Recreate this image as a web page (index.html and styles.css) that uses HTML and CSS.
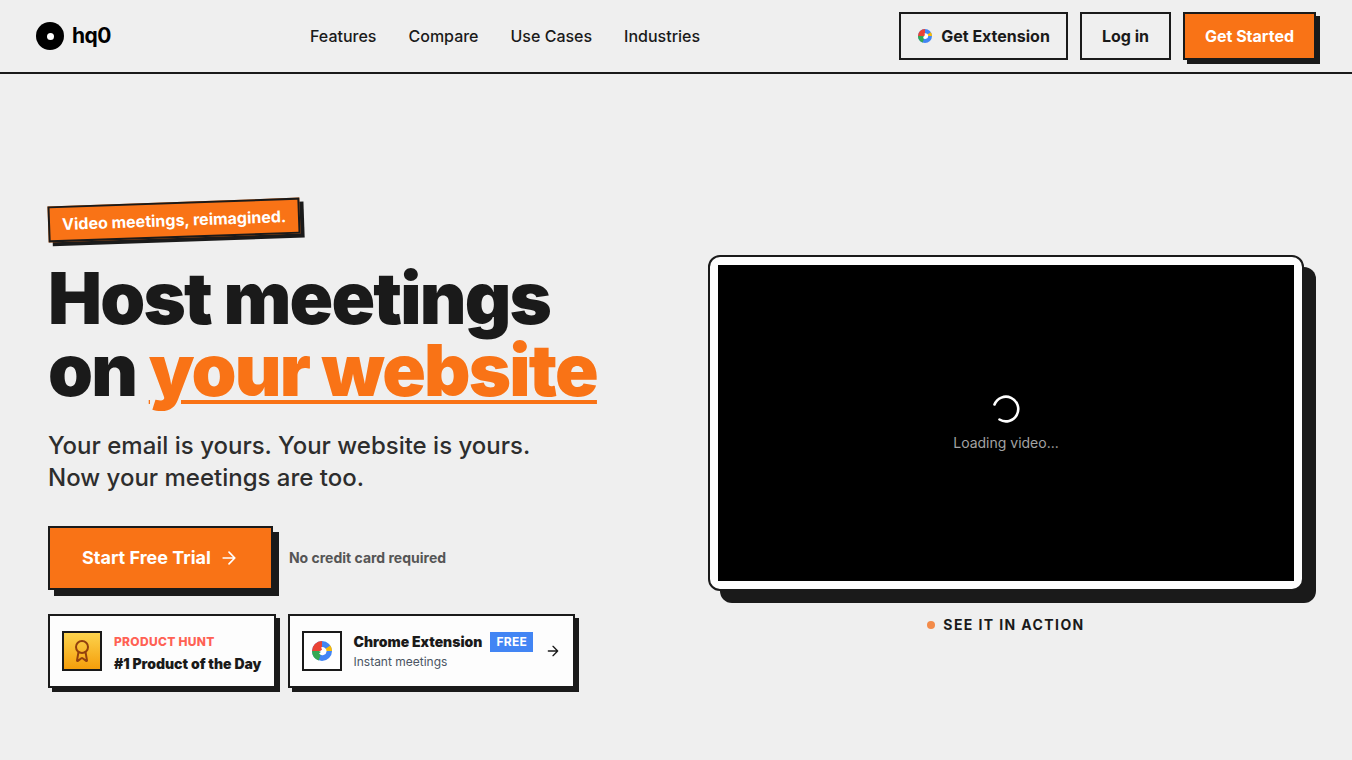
FILE: index.html
```html
<!DOCTYPE html>
<html lang="en">
<head>
    <meta charset="UTF-8">
    <meta name="viewport" content="width=device-width, initial-scale=1.0">
    <title>hq0 - Host meetings on your website</title>
    <link rel="stylesheet" href="styles.css">
</head>
<body>
    <svg class="sprite" aria-hidden="true">
        <symbol id="chrome" viewBox="0 0 24 24">
            <circle cx="12" cy="12" r="12" fill="#4285f4"/>
            <path d="M12 12V0A12 12 0 0 0 0 12z" fill="#ea4335"/>
            <path d="M12 12H0a12 12 0 0 0 8 11.300z" fill="#34a853"/>
            <path d="M12 12h12a12 12 0 0 0-2-6.600z" fill="#fbbc04"/>
            <path d="M11 7.500a5 5 0 0 1 6.500 5 5 5 0 0 1-9 2.500l2.500-2h-2.500l3.500-2.500z" fill="#fff"/>
        </symbol>
        <symbol id="arrow" viewBox="0 0 24 24">
            <path d="M5 12h14M12 5l7 7-7 7" fill="none" stroke="currentColor" stroke-width="2" stroke-linecap="round" stroke-linejoin="round"/>
        </symbol>
    </svg>

    <header class="navbar">
        <a class="logo" href="#">
            <svg class="logo-mark" viewBox="0 0 28 28" aria-hidden="true">
                <circle cx="14" cy="14" r="14" fill="#000"/>
                <circle cx="14.500" cy="14.500" r="3.500" fill="#fff"/>
            </svg>
            hq0
        </a>
        <nav class="nav-links">
            <a href="#">Features</a>
            <a href="#">Compare</a>
            <a href="#">Use Cases</a>
            <a href="#">Industries</a>
        </nav>
        <div class="nav-actions">
            <a class="btn btn-extension" href="#"><svg class="icon-sm" aria-hidden="true"><use href="#chrome"/></svg>Get Extension</a>
            <a class="btn" href="#">Log in</a>
            <a class="btn btn-primary" href="#">Get Started</a>
        </div>
    </header>

    <main class="hero">
        <section class="hero-text">
            <div class="tagline">Video meetings, reimagined.</div>
            <h1>Host meetings<br>on <span class="highlight">your website</span></h1>
            <p class="subtitle">Your email is yours. Your website is yours.<br>Now your meetings are too.</p>
            <div class="cta">
                <button class="btn-trial" type="button">Start Free Trial<svg class="icon-arrow" aria-hidden="true"><use href="#arrow"/></svg></button>
                <span class="cta-note">No credit card required</span>
            </div>
            <div class="cards">
                <a class="card" href="#">
                    <span class="card-icon card-icon-gold">
                        <svg class="icon-award" viewBox="0 0 24 24" fill="none" stroke="currentColor" stroke-width="2" stroke-linecap="round" stroke-linejoin="round" aria-hidden="true">
                            <circle cx="12" cy="8" r="6"/>
                            <path d="m15.477 12.890 1.515 8.526a.5.5 0 0 1-.81.47l-3.580-2.687a1 1 0 0 0-1.197 0l-3.586 2.686a.5.5 0 0 1-.81-.469l1.514-8.526"/>
                        </svg>
                    </span>
                    <span class="card-body card-body-spaced">
                        <span class="card-label">PRODUCT HUNT</span>
                        <span class="card-title">#1 Product of the Day</span>
                    </span>
                </a>
                <a class="card" href="#">
                    <span class="card-icon">
                        <svg class="icon-chrome" aria-hidden="true"><use href="#chrome"/></svg>
                    </span>
                    <span class="card-body">
                        <span class="card-row">
                            <span class="card-title">Chrome Extension</span>
                            <span class="free">FREE</span>
                        </span>
                        <span class="card-desc">Instant meetings</span>
                    </span>
                    <svg class="icon-next" aria-hidden="true"><use href="#arrow"/></svg>
                </a>
            </div>
        </section>

        <section class="hero-video">
            <div class="video-frame">
                <div class="video">
                    <svg class="spinner" viewBox="0 0 32 32" aria-hidden="true">
                        <path d="M4.500 11.500A12.300 12.300 0 1 1 9.500 26.500" fill="none" stroke="#fff" stroke-width="2.600" stroke-linecap="round"/>
                    </svg>
                    <span class="video-status">Loading video...</span>
                </div>
            </div>
            <div class="video-caption"><span class="dot"></span>SEE IT IN ACTION</div>
        </section>
    </main>
</body>
</html>
```

FILE: styles.css
```css
* {
    box-sizing: border-box;
}
body {
    margin: 0;
    font-family: Inter, "Liberation Sans", sans-serif;
    font-size: 16px;
    line-height: 24px;
    color: #1a1a1a;
    background-color: #efefef;
}
a {
    color: inherit;
    text-decoration: none;
}
svg {
    flex-shrink: 0;
}
.sprite {
    display: none;
}

/* header */
.navbar {
    display: flex;
    align-items: center;
    justify-content: space-between;
    padding: 12px 36px;
    border-bottom: 2px solid #1a1a1a;
}
.logo {
    display: flex;
    align-items: center;
    gap: 8px;
    font-size: 21px;
    font-weight: 700;
    letter-spacing: -0.025em;
    color: #000;
}
.logo-mark {
    width: 28px;
    height: 28px;
}
.nav-links {
    display: flex;
    gap: 32px;
    font-weight: 500;
}
.nav-actions {
    display: flex;
    gap: 12px;
}
.btn {
    display: flex;
    align-items: center;
    gap: 8px;
    padding: 10px 20px;
    border: 2px solid #1a1a1a;
    font-weight: 700;
}
.btn-extension {
    padding: 10px 16px;
}
.btn-primary {
    color: #fff;
    background-color: #f97316;
    box-shadow: 4px 4px 0 #1a1a1a;
}
.icon-sm {
    width: 16px;
    height: 16px;
    padding: 1px;
}

/* hero */
.hero {
    display: grid;
    grid-template-columns: 1fr 1fr;
    gap: 64px;
    align-items: center;
    padding: 128px 48px 72px;
}
.tagline {
    width: fit-content;
    padding: 4px 12px;
    border: 2px solid #1a1a1a;
    font-weight: 700;
    color: #fff;
    background-color: #f97316;
    box-shadow: 4px 4px 0 #1a1a1a;
    transform: rotate(-2deg);
}
h1 {
    margin: 24px 0;
    font-size: 72px;
    line-height: 72px;
    font-weight: 900;
    letter-spacing: -0.025em;
}
.highlight {
    color: #f97316;
    text-decoration: underline;
    text-decoration-thickness: 4px;
    text-underline-offset: 4px;
}
.subtitle {
    margin: 0 0 32px;
    font-size: 24px;
    line-height: 32px;
    font-weight: 500;
    color: #2d2d2d;
}
.cta {
    display: flex;
    align-items: center;
    gap: 16px;
    margin-bottom: 24px;
}
.btn-trial {
    display: flex;
    align-items: center;
    gap: 8px;
    padding: 16px 32px;
    border: 2px solid #1a1a1a;
    font: 700 18px/28px Inter, "Liberation Sans", sans-serif;
    color: #fff;
    background-color: #f97316;
    box-shadow: 6px 6px 0 #1a1a1a;
    cursor: pointer;
}
.icon-arrow {
    width: 20px;
    height: 20px;
}
.cta-note {
    font-size: 14px;
    font-weight: 700;
    color: #555;
}
.cards {
    display: flex;
    gap: 12px;
}
.card {
    display: flex;
    align-items: center;
    gap: 12px;
    padding: 12px;
    border: 2px solid #1a1a1a;
    background-color: #fdfdfd;
    box-shadow: 4px 4px 0 #1a1a1a;
}
.card-icon {
    display: flex;
    align-items: center;
    justify-content: center;
    width: 40px;
    height: 40px;
    border: 2px solid #1a1a1a;
    background-color: #fff;
}
.card-icon-gold {
    color: #92400e;
    background: linear-gradient(#fcd34d, #f59e0b);
}
.icon-award {
    width: 24px;
    height: 24px;
}
.icon-chrome {
    width: 20px;
    height: 20px;
}
.card-body {
    display: flex;
    flex-direction: column;
    align-self: stretch;
    padding-top: 4px;
    line-height: 20px;
}
.card-body-spaced {
    gap: 2px;
}
.card-row {
    display: flex;
    align-items: center;
    gap: 8px;
}
.card-label {
    font-size: 12px;
    font-weight: 800;
    letter-spacing: 0.025em;
    color: #ff6154;
}
.card-title {
    font-size: 14px;
    font-weight: 900;
}
.card-desc {
    font-size: 12px;
    color: #4b5563;
}
.free {
    padding: 0 6px;
    font-size: 12px;
    font-weight: 700;
    letter-spacing: 0.025em;
    color: #fff;
    background-color: #4285f4;
}
.icon-next {
    width: 16px;
    height: 16px;
}

/* video */
.video-frame {
    display: flex;
    aspect-ratio: 16 / 9;
    padding: 8px;
    border: 2px solid #1a1a1a;
    border-radius: 12px;
    background-color: #fdfdfd;
    box-shadow: 12px 12px 0 #1a1a1a;
}
.video {
    flex: 1;
    display: flex;
    flex-direction: column;
    align-items: center;
    justify-content: center;
    gap: 8px;
    background-color: #000;
}
.spinner {
    width: 32px;
    height: 32px;
}
.video-status {
    font-size: 14px;
    line-height: 20px;
    color: #a3a3a3;
}
.video-caption {
    display: flex;
    align-items: center;
    justify-content: center;
    gap: 8px;
    margin-top: 24px;
    font-size: 14px;
    line-height: 20px;
    font-weight: 700;
    letter-spacing: 0.1em;
}
.dot {
    width: 8px;
    height: 8px;
    border-radius: 50%;
    background-color: #f38b49;
}
```
